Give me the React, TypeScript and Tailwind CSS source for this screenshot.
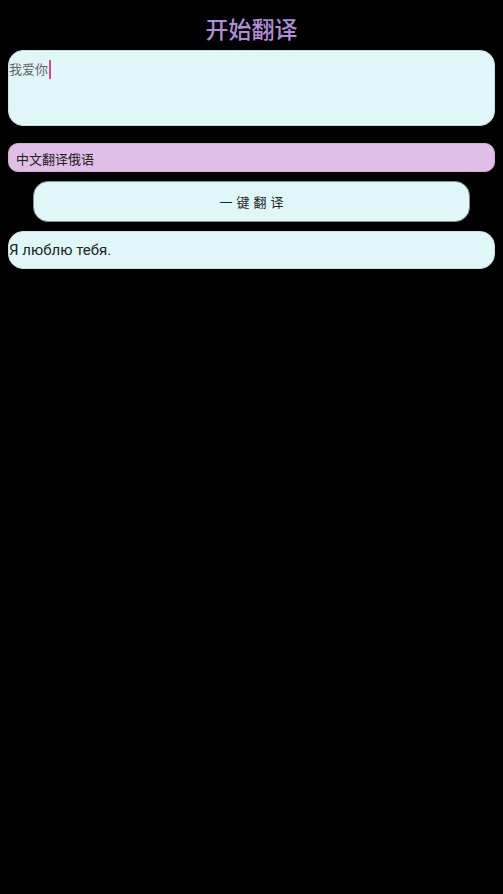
export default function App() {
  const font = { fontFamily: '"Noto Sans CJK SC", "Noto Sans", Roboto, sans-serif' };
  const latin = { fontFamily: 'Roboto, "Noto Sans CJK SC", sans-serif' };

  return (
    <div className="min-h-[894px] w-full bg-black" style={font}>
      <div className="flex flex-col px-2 pt-[11px]">
        {/* Title */}
        <h1 className="text-center text-[23px] leading-[34px] font-medium text-[#b28dd9]">开始翻译</h1>

        {/* Input */}
        <div className="mt-[5px] h-[76px] rounded-[15px] border border-[#c9dfe2] bg-[#e0f7fa]">
          <div className="flex items-center pt-[8px] text-[13px] leading-[20px] text-[#666]">
            <span>我爱你</span>
            <span className="ml-[1px] inline-block h-[19px] w-[2px] bg-[#e0457b]" />
          </div>
        </div>

        {/* Language select */}
        <div className="mt-[17px] flex h-[29px] items-center rounded-[10px] border border-[#cbb0d0] bg-[#e1bee7] px-[7px] pt-[2px] text-[13px] text-[#222]">
          中文翻译俄语
        </div>

        {/* Translate button */}
        <div className="mx-[25px] mt-[9px] flex h-[41px] items-center justify-center rounded-[15px] border border-[#7f9194] bg-[#e0f7fa] pl-[4px] text-[13px] tracking-[4px] text-[#222]">
          一键翻译
        </div>

        {/* Output */}
        <div
          className="mt-[9px] flex h-[38px] items-center rounded-[15px] border border-[#c9dfe2] bg-[#e0f7fa] pt-[1px] text-[15px] text-[#222]"
          style={latin}
        >
          Я люблю тебя.
        </div>
      </div>
    </div>
  );
}
